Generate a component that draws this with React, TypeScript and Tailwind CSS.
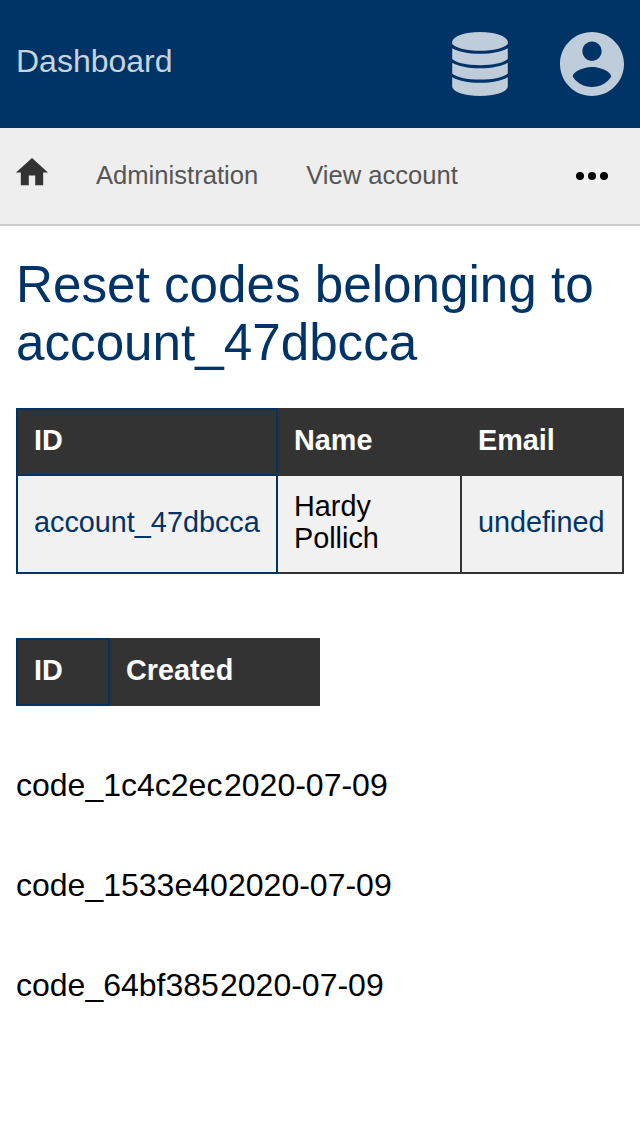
const codes = [
  { id: "code_1c4c2ec", created: "2020-07-09", width: "w-[208px]" },
  { id: "code_1533e40", created: "2020-07-09", width: "w-[212px]" },
  { id: "code_64bf385", created: "2020-07-09", width: "w-[204px]" },
];

export default function App() {
  return (
    <div className="min-h-[1136px] bg-white font-['Liberation_Sans',Arial,sans-serif] text-black">
      <header className="flex h-32 items-start justify-between bg-[#003366] px-4 text-[#bfccd9]">
        <a className="mt-[43px] text-[32px] leading-[36px] text-[#c8d4dd]">Dashboard</a>
        <div className="mt-8 flex gap-12">
          <svg className="h-16 w-16" viewBox="0 0 64 64" fill="currentColor">
            <path d="M4.200 9.500C5.500 4 17 0 32 0S58.500 4 59.800 9.500V12C56 16.300 45 18.800 32 18.800S8 16.300 4.200 12Z" />
            <path d="M4.200 16.300C10 19.800 20 21.800 32 21.800S54 19.800 59.800 16.300V27C56 30.800 45 33.200 32 33.200S8 30.800 4.200 27Z" />
            <path d="M4.200 30.800C10 34.300 20 36.300 32 36.300S54 34.300 59.800 30.800V41.500C56 45.300 45 47.600 32 47.600S8 45.300 4.200 41.500Z" />
            <path d="M4.200 45.300C10 48.800 20 50.800 32 50.800S54 48.800 59.800 45.300V55C58 60.500 47 64 32 64S6 60.500 4.200 55Z" />
          </svg>
          <svg className="h-16 w-16" viewBox="2 2 20 20" fill="currentColor">
            <path d="M12 2C6.48 2 2 6.48 2 12s4.480 10 10 10 10-4.480 10-10S17.520 2 12 2zm0 3c1.660 0 3 1.340 3 3s-1.340 3-3 3-3-1.340-3-3 1.340-3 3-3zm0 14.200c-2.500 0-4.710-1.280-6-3.220.030-1.990 4-3.080 6-3.080 1.990 0 5.970 1.090 6 3.080-1.290 1.940-3.500 3.220-6 3.220z" />
          </svg>
        </div>
      </header>
      <nav className="flex h-[98px] items-start border-b-2 border-[#cccccc] bg-[#eeeeee] px-4 pt-8 text-[25.6px] leading-[30px] text-[#555555]">
        <svg className="-mt-[1.6px] mr-12 h-[27.2px] w-8" viewBox="2 3 20 17" fill="#333333">
          <path d="M10 20v-6h4v6h5v-8h3L12 3 2 12h3v8z" />
        </svg>
        <a className="mr-12">Administration</a>
        <a>View account</a>
        <svg className="mr-4 ml-auto h-8 w-8" viewBox="0 0 32 32" fill="#000">
          <circle cx="4" cy="16" r="4" />
          <circle cx="16" cy="16" r="4" />
          <circle cx="28" cy="16" r="4" />
        </svg>
      </nav>
      <main className="px-4 pt-[30px]">
        <h1 className="text-[51.2px] leading-[58px] text-[#003366]">Reset codes belonging to account_47dbcca</h1>
        <table className="mt-9 w-[608px] table-fixed border-separate border-spacing-0 text-left text-[28.8px] leading-8">
          <colgroup>
            <col className="w-[262px]" />
            <col className="w-[182px]" />
            <col className="w-[164px]" />
          </colgroup>
          <thead>
            <tr className="h-[68px] bg-[#333333] text-white">
              <th className="border-2 border-[#003366] px-4 pb-1">ID</th>
              <th className="px-4 pb-1">Name</th>
              <th className="pb-1 pl-[18px]">Email</th>
            </tr>
          </thead>
          <tbody>
            <tr className="h-[98px] bg-[#f1f1f1]">
              <td className="border-x-2 border-b-2 border-[#003366] px-4 pb-1 text-[#003366]">account_47dbcca</td>
              <td className="border-b-2 border-[#333333] px-4 pb-1">Hardy<br />Pollich</td>
              <td className="border-x-2 border-b-2 border-[#333333] px-4 pb-1 text-[#003366]">undefined</td>
            </tr>
          </tbody>
        </table>
        <table className="mt-16 w-[304px] table-fixed border-separate border-spacing-0 text-left text-[28.8px] leading-8">
          <colgroup>
            <col className="w-[94px]" />
            <col className="w-[210px]" />
          </colgroup>
          <thead>
            <tr className="h-[68px] bg-[#333333] text-white">
              <th className="border-2 border-[#003366] px-4 pb-1">ID</th>
              <th className="px-4 pb-1">Created</th>
            </tr>
          </thead>
        </table>
        <div className="mt-[61px] flex flex-col gap-16">
          {codes.map((code) => (
            <div key={code.id} className="flex text-[32px] leading-9">
              <span className={code.width}>{code.id}</span>
              <span>{code.created}</span>
            </div>
          ))}
        </div>
      </main>
    </div>
  );
}
